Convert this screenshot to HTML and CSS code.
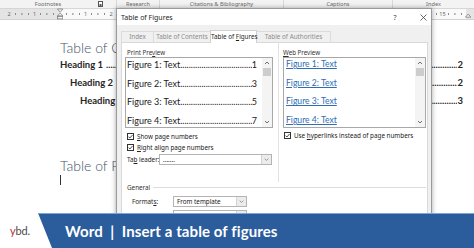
FILE: index.html
```html
<!DOCTYPE html>
<html lang="en">
<head>
<meta charset="utf-8">
<title>Word | Insert a table of figures</title>
<link rel="stylesheet" href="styles.css">
</head>
<body>
<div class="screen">
  <div class="ribbon">
    <span class="rg rg-foot">Footnotes</span>
    <span class="rg rg-launch"><svg width="5" height="6" viewBox="0 0 5 6"><rect x="0.5" y="0.5" width="4" height="5" fill="#fff" stroke="#555"/><rect x="1.5" y="3" width="2" height="2" fill="#555"/></svg></span>
    <span class="rg rg-res">Research</span>
    <span class="rg rg-cit">Citations &amp; Bibliography</span>
    <span class="rg rg-cap">Captions</span>
    <span class="rg rg-idx">Index</span>
  </div>

  <div class="ruler">
    <span class="rc"><b>2</b></span>
    <span class="rc"><b>1</b></span>
    <span class="rc"><b class="mark"><svg width="7" height="12" viewBox="0 0 7 12"><path d="M0.5 0.5 H6.5 L3.5 4 Z" fill="#f4f4f4" stroke="#777" stroke-width="0.8"/><path d="M3.5 5 L6.5 8 H0.5 Z" fill="#f4f4f4" stroke="#777" stroke-width="0.8"/><rect x="0.5" y="8.6" width="6" height="2.8" fill="#f4f4f4" stroke="#777" stroke-width="0.8"/></svg></b></span>
    <span class="rc"><b>1</b></span>
    <span class="rc"><b>2</b></span>
    <span class="rc"><b>3</b></span>
    <span class="rc"><b>4</b></span>
    <span class="rc"><b>5</b></span>
    <span class="rc"><b>6</b></span>
    <span class="rc"><b>7</b></span>
    <span class="rc"><b>8</b></span>
    <span class="rc"><b>9</b></span>
    <span class="rc"><b>10</b></span>
    <span class="rc"><b>11</b></span>
    <span class="rc"><b>12</b></span>
    <span class="rc"><b>13</b></span>
    <span class="rc"><b>14</b></span>
    <span class="rc"><b>15</b></span>
    <span class="rc rc-end"><b class="mark"><svg width="7" height="12" viewBox="0 0 7 12"><path d="M3.5 6 L6.5 9.5 H0.5 Z" fill="#f4f4f4" stroke="#777" stroke-width="0.8"/></svg></b></span>
  </div>

  <div class="doc">
    <h1 class="doc-title">Table of Contents</h1>
    <div class="toc-line lvl1"><span class="toc-label">Heading 1</span><span class="leader"></span><span>2</span></div>
    <div class="toc-line lvl2"><span class="toc-label">Heading 2</span><span class="leader"></span><span>2</span></div>
    <div class="toc-line lvl3"><span class="toc-label">Heading 3</span><span class="leader"></span><span>3</span></div>
    <h1 class="doc-title tof">Table of Figures</h1>
    <div class="cursor"></div>
  </div>

  <div class="dialog">
    <div class="dlg-title">
      <span class="dlg-name">Table of Figures</span>
      <span class="dlg-help">?</span>
      <span class="dlg-close"><svg width="7" height="7" viewBox="0 0 7 7"><path d="M0.5 0.5 L6.5 6.5 M6.5 0.5 L0.5 6.5" stroke="#444" stroke-width="0.8"/></svg></span>
    </div>
    <div class="dlg-body">
      <div class="tabs">
        <span class="tab t1">Inde<u>x</u></span>
        <span class="tab t2">Table of <u>C</u>ontents</span>
        <span class="tab t3 active">Table of <u>F</u>igures</span>
        <span class="tab t4">Table of <u>A</u>uthorities</span>
      </div>
      <div class="panel">
        <div class="previews">
          <div class="pcol pleft">
            <div class="plabel">Print Pre<u>v</u>iew</div>
            <div class="pbox">
              <div class="plines">
                <div class="pline"><span>Figure 1: Text</span><span class="leader"></span><span>1</span></div>
                <div class="pline"><span>Figure 2: Text</span><span class="leader"></span><span>3</span></div>
                <div class="pline"><span>Figure 3: Text</span><span class="leader"></span><span>5</span></div>
                <div class="pline"><span>Figure 4: Text</span><span class="leader"></span><span>7</span></div>
              </div>
              <div class="sbar">
                <span class="sb-btn"><svg width="10" height="10" viewBox="0 0 10 10"><path d="M3 6 L5 4 L7 6" fill="none" stroke="#606060" stroke-width="0.9"/></svg></span>
                <span class="sb-thumb"></span>
                <span class="sb-fill"></span>
                <span class="sb-btn"><svg width="10" height="10" viewBox="0 0 10 10"><path d="M3 4 L5 6 L7 4" fill="none" stroke="#606060" stroke-width="0.9"/></svg></span>
              </div>
            </div>
            <div class="chk first"><span class="cbox"><svg width="5" height="5" viewBox="0 0 5 5"><path d="M0.5 2.6 L1.9 4 L4.6 0.9" fill="none" stroke="#222" stroke-width="0.8"/></svg></span><span><u>S</u>how page numbers</span></div>
            <div class="chk"><span class="cbox"><svg width="5" height="5" viewBox="0 0 5 5"><path d="M0.5 2.6 L1.9 4 L4.6 0.9" fill="none" stroke="#222" stroke-width="0.8"/></svg></span><span><u>R</u>ight align page numbers</span></div>
            <div class="field">
              <span class="flabel lead">Ta<u>b</u> leader:</span>
              <div class="select wide"><span class="sval">.......</span><span class="sarrow"><svg width="10" height="9" viewBox="0 0 10 9"><path d="M3 3.5 L5 5.5 L7 3.5" fill="none" stroke="#777" stroke-width="0.8"/></svg></span></div>
            </div>
          </div>
          <div class="divider"></div>
          <div class="pcol pright">
            <div class="plabel"><u>W</u>eb Preview</div>
            <div class="pbox">
              <div class="plines links">
                <div class="pline"><a>Figure 1: Text</a></div>
                <div class="pline"><a>Figure 2: Text</a></div>
                <div class="pline"><a>Figure 3: Text</a></div>
                <div class="pline"><a>Figure 4: Text</a></div>
              </div>
              <div class="sbar">
                <span class="sb-btn"><svg width="10" height="10" viewBox="0 0 10 10"><path d="M3 6 L5 4 L7 6" fill="none" stroke="#606060" stroke-width="0.9"/></svg></span>
                <span class="sb-thumb"></span>
                <span class="sb-fill"></span>
                <span class="sb-btn"><svg width="10" height="10" viewBox="0 0 10 10"><path d="M3 4 L5 6 L7 4" fill="none" stroke="#606060" stroke-width="0.9"/></svg></span>
              </div>
            </div>
            <div class="chk first right"><span class="cbox"><svg width="5" height="5" viewBox="0 0 5 5"><path d="M0.5 2.6 L1.9 4 L4.6 0.9" fill="none" stroke="#222" stroke-width="0.8"/></svg></span><span>Use <u>h</u>yperlinks instead of page numbers</span></div>
          </div>
        </div>
        <div class="general">
          <div class="legend-row"><span class="legend">General</span><span class="gline"></span></div>
          <div class="frow first">
            <span class="flabel">Format<u>s</u>:</span>
            <div class="select"><span class="sval">From template</span><span class="sarrow"><svg width="10" height="9" viewBox="0 0 10 9"><path d="M3 3.5 L5 5.5 L7 3.5" fill="none" stroke="#777" stroke-width="0.8"/></svg></span></div>
          </div>
          <div class="frow">
            <span class="flabel">Caption <u>l</u>abel:</span>
            <div class="select"><span class="sval">Figure</span><span class="sarrow"><svg width="10" height="9" viewBox="0 0 10 9"><path d="M3 3.5 L5 5.5 L7 3.5" fill="none" stroke="#777" stroke-width="0.8"/></svg></span></div>
          </div>
        </div>
      </div>
    </div>
  </div>

  <div class="banner">
    <div class="band"><span class="band-text">Word&nbsp; | &nbsp;Insert a table of figures</span></div>
    <div class="logo"><span class="logo-y">y</span>bd.</div>
  </div>
</div>
</body>
</html>
```

FILE: styles.css
```css
* { box-sizing: border-box; margin: 0; padding: 0; }
html, body { width: 474px; height: 248px; overflow: hidden; background: #fff; }
body { font-family: "Noto Sans", "DejaVu Sans", sans-serif; color: #222; }
.screen { position: relative; width: 474px; height: 248px; overflow: hidden; background: #fff; }

/* ribbon group labels */
.ribbon { display: flex; height: 8px; background: #f3f3f3; font-size: 5.6px; line-height: 8px; color: #6a6a6a; white-space: nowrap; }
.rg { display: flex; justify-content: center; align-items: center; border-right: 1px solid #d8d8d8; overflow: hidden; }
.rg-foot { width: 96px; border-right: none; }
.rg-launch { width: 21px; justify-content: flex-start; padding-left: 2px; }
.rg-res { width: 43px; }
.rg-cit { width: 124px; }
.rg-cap { width: 109px; }
.rg-idx { flex: 1; border-right: none; }

/* ruler */
.ruler { display: flex; height: 12px; padding-left: 5.8px; font-size: 5.6px; line-height: 10px; color: #666;
  border-top: 1px solid #d6d6d6; border-bottom: 1px solid #d2d2d2;
  background: linear-gradient(to right, #e4e4e4 60px, #f9f9f9 60px, #f9f9f9 466px, #e4e4e4 466px); }
.rc { flex: 0 0 25.5px; height: 10px;
  background:
    radial-gradient(circle at 9.56px 5px, #8a8a8a 0.55px, transparent 0.9px),
    radial-gradient(circle at 15.94px 5px, #8a8a8a 0.55px, transparent 0.9px),
    radial-gradient(circle at 22.31px 5px, #8a8a8a 0.55px, transparent 0.9px); }
.rc-end { background: none; }
.rc b { display: flex; justify-content: center; width: 6.375px; font-weight: 400; }
.rc b.mark { height: 10px; align-items: center; }

/* document */
.doc { padding: 0 11px 0 60px; font-family: "Lato", "Open Sans", sans-serif; }
.doc-title { font-weight: 300; font-size: 14px; line-height: 15px; color: #44546a; margin-top: 20px; white-space: nowrap; }
.doc-title.tof { margin-top: 48.5px; }
.toc-line { display: flex; align-items: center; height: 18px; font-weight: 700; font-size: 9.5px; color: #262626; white-space: nowrap; }
.toc-label { padding-right: 3px; }
.toc-line.lvl2 { padding-left: 10px; }
.toc-line.lvl3 { padding-left: 20px; }
.leader { flex: 1 1 0; min-width: 0; overflow: hidden; white-space: nowrap; }
.leader::after { content: "................................................................................................................................................................................................................................................................"; }
.cursor { width: 1px; height: 10px; margin-top: 2.5px; background: #333; }

/* dialog */
.dialog { position: absolute; left: 116px; top: 8px; width: 316px; height: 260px; background: #f0f0f0;
  border: 1px solid #9a9a9a; box-shadow: 0 0 5px rgba(0,0,0,0.35); font-size: 6.3px; color: #1e1e1e; }
.dlg-title { display: flex; align-items: center; height: 16px; background: #fff; padding-left: 4px; padding-right: 1px; font-size: 7px; }
.dlg-name { flex: 1; }
.dlg-help { width: 10px; text-align: center; margin-right: 16px; color: #444; }
.dlg-close { width: 14px; display: flex; justify-content: center; }
.dlg-body { padding: 6px 3px 0 4px; }

.tabs { display: flex; align-items: flex-end; height: 11px; }
.tab { height: 11px; line-height: 10px; text-align: center; color: #8c8c8c; white-space: nowrap;
  border: 1px solid #dcdcdc; border-bottom: none; background: #f0f0f0; }
.tab + .tab { margin-left: -1px; }
.t1 { width: 33px; }
.t2 { width: 58px; }
.t3 { width: 47px; }
.t4 { width: 75px; }
.tab.active { position: relative; z-index: 1; height: 13px; margin-top: -1px; margin-bottom: -1px; background: #fff; color: #1e1e1e; border-color: #d0d0d0; line-height: 11px; }
.tab u { text-decoration: none; }
.tab.active u { text-decoration: underline; }

.panel { background: #fff; border: 1px solid #d9d9d9; height: 240px; }
.previews { display: grid; grid-template-columns: 156px 1px 1fr; height: 139px; }
.divider { background: #e2e2e2; }
.pcol { padding-top: 5px; min-width: 0; }
.pleft { padding-left: 3px; padding-right: 5px; }
.pright { padding-left: 4px; padding-right: 1px; }
.plabel { height: 9px; line-height: 9px; padding-left: 2px; font-size: 6.2px; color: #333; white-space: nowrap; }
.pright .plabel { padding-left: 0; }
.pbox { display: flex; height: 71px; border: 1px solid #a8a8a8; background: #fff; }
.plines { flex: 1 1 0; min-width: 0; display: flex; flex-direction: column; gap: 5.6px; padding: 0 5px 0 1px;
  font-family: "Lato", "Open Sans", sans-serif; font-size: 9px; color: #1a1a1a; }
.pline { display: flex; height: 13px; line-height: 13px; white-space: nowrap; min-width: 0; }
.links { padding-left: 2px; }
.links a { color: #2f6db5; text-decoration: underline; font-size: 8.6px; }
.sbar { flex: 0 0 10px; width: 10px; display: flex; flex-direction: column; background: #f4f4f4; }
.sb-btn { display: block; height: 10px; }
.sb-btn svg { display: block; }
.sb-thumb { height: 8px; background: #cdcdcd; margin: 0 1px; }
.sb-fill { flex: 1; }

.chk { display: flex; align-items: center; gap: 3px; height: 11px; padding-left: 2px; white-space: nowrap; color: #222; }
.chk.first { margin-top: 2.5px; }
.chk.right { margin-top: 1.5px; padding-left: 1px; }
.cbox { width: 7px; height: 7px; border: 1px solid #333; background: #fff; display: flex; flex: 0 0 7px; }
.cbox svg { display: block; }

.field { display: flex; align-items: center; height: 11px; margin-top: 1.5px; padding-left: 2px; }
.flabel { white-space: nowrap; }
.flabel.lead { width: 32px; }
.select { display: flex; height: 11px; width: 74px; border: 1px solid #b4b4b4; background: #fff; }
.select.wide { width: 113px; }
.sval { flex: 1; padding-left: 3px; line-height: 9px; white-space: nowrap; color: #222; }
.sarrow { width: 10px; border-left: 1px solid #d2d2d2; background: #ececec; display: flex; }
.sarrow svg { display: block; }

.general { padding: 0 1px 0 5px; }
.legend-row { display: flex; align-items: center; height: 10px; }
.legend { color: #333; padding-right: 3px; }
.gline { flex: 1; height: 1px; background: #dcdcdc; }
.frow { display: flex; align-items: center; height: 11px; padding-left: 5px; margin-top: 3px; }
.frow.first { margin-top: 3.5px; }
.frow .flabel { width: 41px; }

/* bottom banner */
.banner { position: absolute; left: 0; bottom: 0; width: 474px; height: 35px; display: grid; grid-template-areas: "stack"; background: rgba(255,255,255,0.93); }
.band { grid-area: stack; background: #2b5c9c; border-top: 1px solid #7aa6d8;
  clip-path: polygon(38px 0, 100% 0, 100% 100%, 52px 100%); display: flex; align-items: center; padding-left: 65px; }
.band-text { font-family: "Lato", "Open Sans", sans-serif; font-weight: 700; font-size: 15px; color: #fff; white-space: nowrap; letter-spacing: 0.1px; }
.logo { grid-area: stack; align-self: center; justify-self: start; padding-left: 10px; font-family: "Lato", sans-serif; font-size: 11px; color: #4a4a4a; letter-spacing: -0.2px; }
.logo-y { color: #b0353a; }
```
